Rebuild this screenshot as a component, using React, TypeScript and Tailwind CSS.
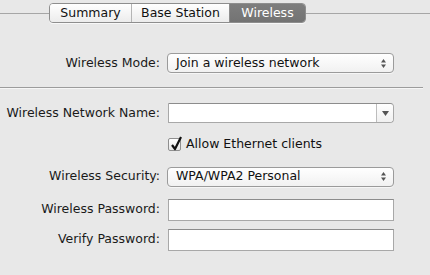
import React from 'react';

const font = { fontFamily: '"DejaVu Sans", "Liberation Sans", sans-serif' };

const Label: React.FC<{ text: string }> = ({ text }) => (
  <div className="w-[161px] shrink-0 text-right pr-[1px] text-[12.5px] text-[#1a1a1a]">{text}</div>
);

const PopUp: React.FC<{ value: string }> = ({ value }) => (
  <div className="ml-[6px] w-[227px] h-[20px] flex items-center rounded-[4px] border border-[#9b9b9b] bg-gradient-to-b from-white to-[#f1f1f1] shadow-[0_1px_0_rgba(255,255,255,0.6)] pl-[8px] pr-[6px]">
    <span className="flex-1 text-[12.5px] text-[#111]">{value}</span>
    <svg width="7" height="11" viewBox="0 0 7 11">
      <path d="M3.5 1 L6 4.5 L1 4.5 Z" fill="#555" />
      <path d="M3.5 10 L6 6.5 L1 6.5 Z" fill="#555" />
    </svg>
  </div>
);

const TextField: React.FC = () => (
  <div className="ml-[7px] w-[226px] h-[22px] bg-white border border-[#a8a8a8] border-t-[#8c8c8c]" />
);

export default function App() {
  return (
    <div className="w-[430px] h-[275px] bg-[#e8e8e8] overflow-hidden" style={font}>
      {/* segmented tabs */}
      <div className="flex items-center pt-[3px]">
        <div className="w-[49px] h-px bg-[#a6a6a6]" />
        <div className="flex h-[20px] rounded-[4px] border border-[#8e8e8e] overflow-hidden text-[12.5px] shadow-[0_1px_0_rgba(255,255,255,0.7)]">
          <div className="w-[82px] flex items-center justify-center bg-gradient-to-b from-white to-[#ececec] text-[#111] border-r border-[#b5b5b5]">Summary</div>
          <div className="w-[98px] flex items-center justify-center bg-gradient-to-b from-white to-[#ececec] text-[#111] border-r border-[#8e8e8e]">Base Station</div>
          <div className="w-[75px] flex items-center justify-center bg-gradient-to-b from-[#7e7e7e] to-[#737373] text-white">Wireless</div>
        </div>
        <div className="flex-1 h-px bg-[#a6a6a6]" />
      </div>

      <div className="flex items-center mt-[30px]">
        <Label text="Wireless Mode:" />
        <PopUp value="Join a wireless network" />
      </div>

      <div className="mt-[14px] mr-[7px] h-px bg-[#9c9c9c] shadow-[0_1px_0_rgba(255,255,255,0.6)]" />

      <div className="flex items-center mt-[15px]">
        <Label text="Wireless Network Name:" />
        <div className="ml-[7px] w-[226px] h-[20px] flex bg-white border border-[#a8a8a8] border-t-[#8c8c8c] rounded-r-[4px]">
          <div className="flex-1" />
          <div className="w-[17px] border-l border-[#bdbdbd] flex items-center justify-center bg-gradient-to-b from-white to-[#f0f0f0] rounded-r-[4px]">
            <svg width="7" height="5" viewBox="0 0 7 5">
              <path d="M0 0 L7 0 L3.5 5 Z" fill="#555" />
            </svg>
          </div>
        </div>
      </div>

      <div className="flex items-center mt-[12px] ml-[168px]">
        <div className="relative w-[13px] h-[13px] rounded-[2px] border border-[#8f8f8f] bg-gradient-to-b from-white to-[#e6e6e6]">
          <svg className="absolute left-[1px] -top-[3px]" width="13" height="15" viewBox="0 0 13 15">
            <path d="M2 9 L5 13 L11 1" fill="none" stroke="#111" strokeWidth="2.2" strokeLinejoin="round" />
          </svg>
        </div>
        <span className="ml-[5px] text-[12.5px] text-[#111]">Allow Ethernet clients</span>
      </div>

      <div className="flex items-center mt-[13px]">
        <Label text="Wireless Security:" />
        <PopUp value="WPA/WPA2 Personal" />
      </div>

      <div className="flex items-center mt-[12px]">
        <Label text="Wireless Password:" />
        <TextField />
      </div>

      <div className="flex items-center mt-[8px]">
        <Label text="Verify Password:" />
        <TextField />
      </div>
    </div>
  );
}
